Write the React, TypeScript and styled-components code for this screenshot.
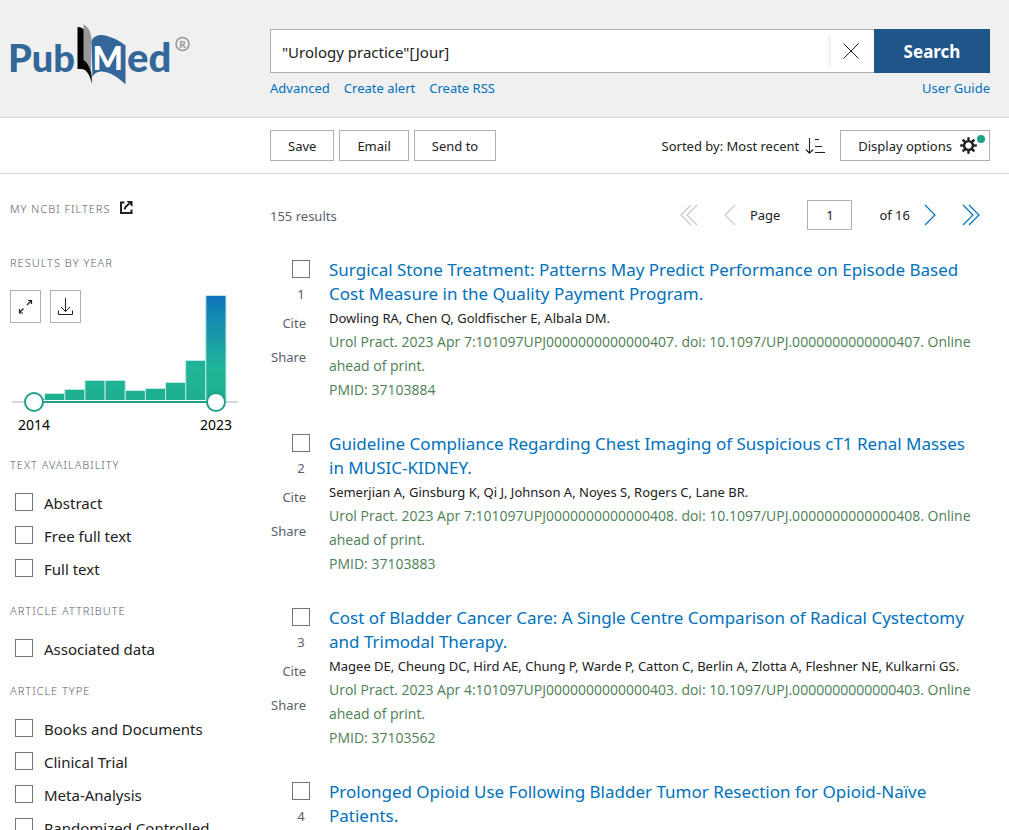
import React, { useState } from 'react';
import styled, { createGlobalStyle } from 'styled-components';

const GlobalStyle = createGlobalStyle`
  *, *::before, *::after { box-sizing: border-box; }
  html { scrollbar-width: none; }
  body {
    margin: 0;
    background: #fff;
    color: #212121;
    font-family: "Noto Sans", "Open Sans", sans-serif;
    font-size: 13px;
    line-height: 20px;
  }
  button, input { font: inherit; color: inherit; }
`;

const SIDE = '260px';

const Header = styled.header`
  display: grid;
  grid-template-columns: ${SIDE} minmax(0, 1fr);
  padding: 0 19px 0 10px;
  height: 118px;
  background: #f0f0f0;
  border-bottom: 1px solid #d6d7d9;
`;

const LogoLink = styled.a`
  display: block;
  width: 200px;
  height: 70px;
  margin: 20px 0 0 -10px;
`;

const SearchArea = styled.form`
  padding-top: 29px;
`;

const SearchRow = styled.div`
  display: flex;
  height: 44px;
`;

const SearchField = styled.div`
  flex: 1;
  display: flex;
  background: #fff;
  border: 1px solid #aeb0b5;
  border-right: 0;
`;

const SearchInput = styled.input`
  flex: 1;
  min-width: 0;
  border: 0;
  outline: 0;
  padding: 2px 11px 0;
  background: transparent;
  font-size: 15px;
`;

const ClearButton = styled.button`
  display: flex;
  align-items: center;
  justify-content: center;
  width: 43px;
  margin: 3px 0;
  padding: 0 4px 0 0;
  border: 0;
  background: #fff;
  box-shadow: -4px 0 5px -2px rgba(0, 0, 0, 0.08);
`;

const SearchButton = styled.button`
  width: 116px;
  border: 0;
  padding: 2px 0 0;
  background: #20558a;
  color: #fff;
  font-size: 17px;
  font-weight: 700;
`;

const LinkRow = styled.nav`
  display: flex;
  gap: 14px;
  padding-top: 5px;
`;

const TextLink = styled.a<{ $end?: boolean }>`
  color: #0071bc;
  text-decoration: none;
  margin-left: ${(p) => (p.$end ? 'auto' : '0')};
`;

const Toolbar = styled.div`
  display: flex;
  align-items: center;
  gap: 5px;
  height: 56px;
  padding: 0 19px 0 270px;
  border-bottom: 1px solid #d6d7d9;
`;

const ToolButton = styled.button`
  display: flex;
  align-items: center;
  height: 31px;
  padding: 0 17px;
  border: 1px solid #aeb0b5;
  background: #fff;
  white-space: nowrap;
`;

const SortLabel = styled.div`
  display: flex;
  align-items: center;
  gap: 6px;
  margin-left: auto;
  margin-right: 10px;
  white-space: nowrap;
`;

const DisplayButton = styled(ToolButton)`
  position: relative;
  gap: 8px;
  padding: 0 12px 0 17px;
`;

const Dot = styled.span`
  position: absolute;
  top: 4px;
  right: 4px;
  width: 8px;
  height: 8px;
  border-radius: 50%;
  background: #1fa388;
`;

const Body = styled.div`
  display: grid;
  grid-template-columns: ${SIDE} minmax(0, 1fr);
  padding: 0 19px 0 10px;
`;

const Sidebar = styled.aside`
  padding-top: 25px;
`;

const SideHeading = styled.h3<{ $gap: number }>`
  display: flex;
  align-items: center;
  gap: 10px;
  margin: 0 0 ${(p) => p.$gap}px;
  height: 20px;
  color: #5b616b;
  font-size: 11px;
  font-weight: 300;
  letter-spacing: 1px;
  text-transform: uppercase;
`;

const Timeline = styled.div`
  position: relative;
  width: 230px;
  height: 165px;
`;

const ChartTools = styled.div`
  position: absolute;
  top: 0;
  left: 0;
  display: flex;
  gap: 9px;
`;

const ChartButton = styled.button`
  display: flex;
  align-items: center;
  justify-content: center;
  width: 31px;
  height: 33px;
  padding: 0;
  border: 1px solid #aeb0b5;
  background: #fff;
`;

const YearRange = styled.input`
  position: absolute;
  left: 14px;
  top: 102px;
  width: 202px;
  height: 20px;
  margin: 0;
  appearance: none;
  background: transparent;
  pointer-events: none;
  &::-webkit-slider-thumb {
    appearance: none;
    width: 20px;
    height: 20px;
    border: 2px solid #1fa388;
    border-radius: 50%;
    background: #fff;
    pointer-events: auto;
  }
`;

const YearLabels = styled.div`
  display: flex;
  justify-content: space-between;
  padding: 0 8px;
  height: 20px;
  color: #000;
  font-size: 14px;
`;

const FilterList = styled.ul`
  list-style: none;
  margin: 0 0 16px;
  padding: 0 0 0 5px;
`;

const FilterLabel = styled.label`
  display: flex;
  align-items: center;
  gap: 11px;
  height: 33px;
  font-size: 15px;
  white-space: nowrap;
`;

const Check = styled.input`
  appearance: none;
  flex: none;
  width: 18px;
  height: 18px;
  margin: 0;
  border: 1px solid #71767a;
  background: #fff;
  &:checked { background: #0071bc; }
`;

const FilterCheck = styled(Check)`
  margin-bottom: 2px;
`;

const Main = styled.main`
  padding-top: 26px;
`;

const ResultsBar = styled.div`
  display: flex;
  align-items: center;
  justify-content: space-between;
  height: 30px;
  margin-bottom: 28px;
  padding-right: 10px;
`;

const Amount = styled.div`
  padding-top: 2px;
  color: #5b616b;
`;

const Pager = styled.nav`
  display: flex;
  align-items: center;
`;

const PagerButton = styled.button<{ $off?: boolean; $before?: number }>`
  display: flex;
  padding: 0;
  border: 0;
  margin-left: ${(p) => p.$before ?? 0}px;
  background: none;
  color: ${(p) => (p.$off ? '#c6c8cc' : '#0071bc')};
`;

const PageLabel = styled.label`
  display: flex;
  align-items: center;
  gap: 27px;
  margin-left: 14px;
`;

const PageInput = styled.input`
  width: 45px;
  height: 30px;
  padding: 0;
  border: 1px solid #aeb0b5;
  text-align: center;
  background: #fff;
`;

const Article = styled.article`
  display: grid;
  grid-template-columns: 40px minmax(0, 1fr);
  column-gap: 19px;
  margin-bottom: 30px;
  padding-right: 10px;
`;

const ArticleTools = styled.div`
  display: flex;
  flex-direction: column;
  align-items: flex-end;
  padding-top: 2px;
  color: #5b616b;
`;

const Position = styled.label`
  width: 18px;
  margin: 6px 0 9px;
  text-align: center;
`;

const ActionButton = styled.button`
  margin-bottom: 14px;
  margin-right: 4px;
  padding: 0;
  border: 0;
  background: none;
`;

const Title = styled.a`
  display: block;
  color: #0071bc;
  font-size: 17px;
  line-height: 24px;
  text-decoration: none;
`;

const Line = styled.div`
  line-height: 24px;
`;

const CiteLine = styled(Line)`
  color: #4d8055;
  font-family: "Open Sans", "Noto Sans", sans-serif;
  font-size: 14px;
`;

const Logo = () => (
  <svg width="200" height="70" viewBox="-10 0 200 70" fontFamily="Lato, sans-serif" fontWeight="900">
    <text x="-2" y="52" fontSize="38" fill="#336699">Pub</text>
    <path d="M67.500 7c3 0 5 1 7 3l7 44 .5 10c-1.500-7-4-12-8-14.500-2-1-4-.5-6.500-.5z" fill="#000" />
    <path d="M73.500 4c5 3 7.500 8 8 15l-.5 34c-1-5-3-10-7.500-13z" fill="#999" />
    <path d="M81.500 21C85 14 92 14.500 97 16c7 2 13 5 18.500 9.500v39C108 57 100 52 92 51.500c-5 0-8 2-9.500 6z" fill="#336699" />
    <text x="82.500" y="50" fontSize="32" fill="#fff">M</text>
    <text x="117" y="52" fontSize="40" fill="#336699">ed</text>
    <circle cx="172.500" cy="24" r="6.500" fill="none" stroke="#999" strokeWidth="1.500" />
    <text x="172.500" y="27.500" fontSize="10" textAnchor="middle" fill="#999">R</text>
  </svg>
);

const CloseIcon = () => (
  <svg width="16" height="16" viewBox="0 0 16 16" fill="none" stroke="#212121" strokeWidth="1">
    <path d="M.5.5l15 15M15.500.5l-15 15" />
  </svg>
);

const SortIcon = () => (
  <svg width="20" height="18" viewBox="0 0 20 18" fill="none" stroke="#212121" strokeWidth="1.100">
    <path d="M4.500 1v15M.8 12.500l3.700 3.700 3.700-3.700M10 2.500h4M10 9.500h7M10 15.500h10" />
  </svg>
);

const GearIcon = () => (
  <svg width="17" height="17" viewBox="-8.500 -8.500 17 17" fill="none" stroke="#212121">
    <circle r="4.400" strokeWidth="2.400" />
    {[0, 45, 90, 135, 180, 225, 270, 315].map((a) => (
      <path key={a} d="M0-5v-3.300" strokeWidth="2.400" transform={`rotate(${a})`} />
    ))}
  </svg>
);

const ExternalIcon = () => (
  <svg width="13" height="17" viewBox="0 0 13 17" fill="none" stroke="#212121" strokeWidth="2">
    <path d="M4.500 1.500H1v10.500h10.500V8.500" />
    <path d="M4.500 8.500L5.500 6 9 2.800" />
    <path d="M6.500 0H12.500v6z" fill="#212121" stroke="none" />
  </svg>
);

const ExpandIcon = () => (
  <svg width="15" height="15" viewBox="0 0 15 15" fill="none" stroke="#212121" strokeWidth="1.200">
    <path d="M9 6l4-4M10 1.500H13.500V5M5.500 9.500l-4 4M1.500 10v4H5" />
  </svg>
);

const DownloadIcon = () => (
  <svg width="16" height="18" viewBox="0 0 16 18" fill="none" stroke="#212121" strokeWidth="1">
    <path d="M7.500 0v13.500M3 9L7.500 13.500 12 9M.5 12.500v4h14v-4" />
  </svg>
);

const Chevron = ({ double, left }: { double?: boolean; left?: boolean }) => (
  <svg width={double ? 18 : 12} height="22" viewBox={double ? '0 0 18 22' : '0 0 12 22'} fill="none" stroke="currentColor" strokeWidth="1.200">
    <g transform={left ? `translate(${double ? 18 : 12} 0) scale(-1 1)` : undefined}>
      <path d="M1 1l10 10L1 21" />
      {double && <path d="M7 1l10 10L7 21" />}
    </g>
  </svg>
);

const BAR_HEIGHTS = [2, 7, 11, 20, 20, 10, 12, 18, 40, 105];

const ChartSvg = styled.svg`
  display: block;
`;

const Histogram = () => (
  <ChartSvg width="230" height="125" viewBox="0 0 230 125">
    <defs>
      <linearGradient id="bar" gradientUnits="userSpaceOnUse" x1="0" y1="5" x2="0" y2="110">
        <stop offset="0" stopColor="#0f75bc" />
        <stop offset="0.700" stopColor="#20b698" />
        <stop offset="1" stopColor="#1fae90" />
      </linearGradient>
    </defs>
    {BAR_HEIGHTS.map((h, i) => (
      <rect key={i} x={14.500 + i * 20.150} y={110.500 - h} width="20.150" height={h} fill="url(#bar)" stroke="#bfe8de" strokeWidth="1" />
    ))}
    <path d="M2 112h226" stroke="#d6d7d9" strokeWidth="2" />
    <path d="M24 112h182" stroke="#fff" strokeWidth="4" />
    <path d="M24 112h182" stroke="#1fa388" strokeWidth="2" />
  </ChartSvg>
);

const FilterGroup = ({ title, items }: { title: string; items: string[] }) => (
  <section>
    <SideHeading $gap={11}>{title}</SideHeading>
    <FilterList>
      {items.map((item) => (
        <li key={item}>
          <FilterLabel>
            <FilterCheck type="checkbox" />
            {item}
          </FilterLabel>
        </li>
      ))}
    </FilterList>
  </section>
);

const ARTICLES = [
  {
    title: 'Surgical Stone Treatment: Patterns May Predict Performance on Episode Based Cost Measure in the Quality Payment Program.',
    authors: 'Dowling RA, Chen Q, Goldfischer E, Albala DM.',
    cite: 'Urol Pract. 2023 Apr 7:101097UPJ0000000000000407. doi: 10.1097/UPJ.0000000000000407. Online ahead of print.',
    pmid: '37103884',
  },
  {
    title: 'Guideline Compliance Regarding Chest Imaging of Suspicious cT1 Renal Masses in MUSIC-KIDNEY.',
    authors: 'Semerjian A, Ginsburg K, Qi J, Johnson A, Noyes S, Rogers C, Lane BR.',
    cite: 'Urol Pract. 2023 Apr 7:101097UPJ0000000000000408. doi: 10.1097/UPJ.0000000000000408. Online ahead of print.',
    pmid: '37103883',
  },
  {
    title: 'Cost of Bladder Cancer Care: A Single Centre Comparison of Radical Cystectomy and Trimodal Therapy.',
    authors: 'Magee DE, Cheung DC, Hird AE, Chung P, Warde P, Catton C, Berlin A, Zlotta A, Fleshner NE, Kulkarni GS.',
    cite: 'Urol Pract. 2023 Apr 4:101097UPJ0000000000000403. doi: 10.1097/UPJ.0000000000000403. Online ahead of print.',
    pmid: '37103562',
  },
  {
    title: 'Prolonged Opioid Use Following Bladder Tumor Resection for Opioid-Naïve Patients.',
  },
];

export default function App() {
  const [query, setQuery] = useState('"Urology practice"[Jour]');
  return (
    <>
      <GlobalStyle />
      <Header>
        <LogoLink href="#" aria-label="PubMed home">
          <Logo />
        </LogoLink>
        <SearchArea onSubmit={(e) => e.preventDefault()}>
          <SearchRow>
            <SearchField>
              <SearchInput aria-label="Search term" value={query} onChange={(e) => setQuery(e.target.value)} />
              <ClearButton type="button" aria-label="Clear search" onClick={() => setQuery('')}>
                <CloseIcon />
              </ClearButton>
            </SearchField>
            <SearchButton type="submit">Search</SearchButton>
          </SearchRow>
          <LinkRow>
            <TextLink href="#">Advanced</TextLink>
            <TextLink href="#">Create alert</TextLink>
            <TextLink href="#">Create RSS</TextLink>
            <TextLink href="#" $end>User Guide</TextLink>
          </LinkRow>
        </SearchArea>
      </Header>
      <Toolbar>
        <ToolButton>Save</ToolButton>
        <ToolButton>Email</ToolButton>
        <ToolButton>Send to</ToolButton>
        <SortLabel>
          Sorted by: Most recent
          <SortIcon />
        </SortLabel>
        <DisplayButton>
          Display options
          <GearIcon />
          <Dot />
        </DisplayButton>
      </Toolbar>
      <Body>
        <Sidebar>
          <SideHeading $gap={34}>
            My NCBI Filters
            <ExternalIcon />
          </SideHeading>
          <SideHeading $gap={17}>Results by year</SideHeading>
          <Timeline>
            <Histogram />
            <ChartTools>
              <ChartButton aria-label="Expand"><ExpandIcon /></ChartButton>
              <ChartButton aria-label="Download CSV"><DownloadIcon /></ChartButton>
            </ChartTools>
            <YearRange type="range" aria-label="From year" min={2014} max={2023} defaultValue={2014} />
            <YearRange type="range" aria-label="To year" min={2014} max={2023} defaultValue={2023} />
            <YearLabels>
              <span>2014</span>
              <span>2023</span>
            </YearLabels>
          </Timeline>
          <FilterGroup title="Text availability" items={['Abstract', 'Free full text', 'Full text']} />
          <FilterGroup title="Article attribute" items={['Associated data']} />
          <FilterGroup title="Article type" items={['Books and Documents', 'Clinical Trial', 'Meta-Analysis', 'Randomized Controlled']} />
        </Sidebar>
        <Main>
          <ResultsBar>
            <Amount>155 results</Amount>
            <Pager aria-label="Pages">
              <PagerButton $off aria-label="First page"><Chevron double left /></PagerButton>
              <PagerButton $off $before={26} aria-label="Previous page"><Chevron left /></PagerButton>
              <PageLabel>
                Page
                <PageInput defaultValue="1" />
                of 16
              </PageLabel>
              <PagerButton $before={14} aria-label="Next page"><Chevron /></PagerButton>
              <PagerButton $before={26} aria-label="Last page"><Chevron double /></PagerButton>
            </Pager>
          </ResultsBar>
          {ARTICLES.map((a, i) => (
            <Article key={a.title}>
              <ArticleTools>
                <Check type="checkbox" id={`result-${i}`} />
                <Position htmlFor={`result-${i}`}>{i + 1}</Position>
                {a.pmid && <ActionButton>Cite</ActionButton>}
                {a.pmid && <ActionButton>Share</ActionButton>}
              </ArticleTools>
              <div>
                <Title href="#">{a.title}</Title>
                {a.authors && <Line>{a.authors}</Line>}
                {a.cite && <CiteLine>{a.cite}</CiteLine>}
                {a.pmid && <CiteLine>PMID: {a.pmid}</CiteLine>}
              </div>
            </Article>
          ))}
        </Main>
      </Body>
    </>
  );
}
